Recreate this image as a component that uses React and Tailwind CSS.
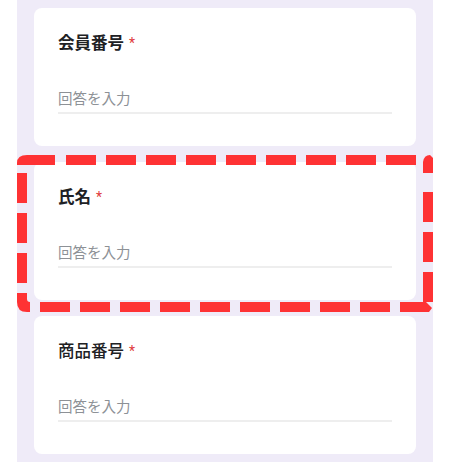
import React from "react";

const questions = [
  { id: 1, title: "会員番号", weight: "font-bold" },
  { id: 2, title: "氏名", weight: "font-bold" },
  { id: 3, title: "商品番号", weight: "font-medium" },
];

const QuestionCard = ({ title, weight }) => {
  return (
    <div className="bg-white rounded-lg h-[138px] px-6 pt-6 pb-8 flex flex-col">
      <div className={`h-6 flex items-center text-[16.5px] text-[#202124] leading-6 ${weight}`}>
        <span>{title}</span>
        <span className="text-[#e0393b] font-normal pl-[5px] self-start text-[14px] leading-4 mt-[3px]">*</span>
      </div>
      <div className="mt-[33px] flex flex-col">
        <span className="text-[14.5px] text-[#8d9196] leading-[21px] h-[21px]">回答を入力</span>
        <div className="mt-[2px] h-[2px] bg-[#eeeeee]" />
      </div>
    </div>
  );
};

// red dashed frame around the second card
const Highlight = () => {
  const red = "#fe3234";
  const top = [66, 106, 146, 186, 226, 266, 306, 346, 386];
  const bottom = [40, 80, 120, 160, 200, 240, 280, 320, 360];
  const left = [173, 213, 253];
  const right = [192, 232, 272];
  return (
    <svg className="absolute top-0 left-0 pointer-events-none" width="450" height="462" viewBox="0 0 450 462">
      <g fill={red}>
        <path d="M17 165 L17 163 Q17 155 27 155 L55 155 L55 165 Z" />
        {top.map((x) => (
          <rect key={"t" + x} x={x} y="155" width="30" height="10" />
        ))}
        <path d="M423 173 L423 162 Q424 155 430 155 L433 158 L433 173 Z" />
        {right.map((y) => (
          <rect key={"r" + y} x="423" y={y} width="10" height="30" />
        ))}
        <path d="M400 302 L426 302 L432 308 L429 312 L400 312 Z" />
        {bottom.map((x) => (
          <rect key={"b" + x} x={x} y="302" width="30" height="10" />
        ))}
        <path d="M17 293 L27 293 L27 299 Q27 302 30 302 L30 312 L27 312 Q17 312 17 302 Z" />
        {left.map((y) => (
          <rect key={"l" + y} x="17" y={y} width="10" height="30" />
        ))}
      </g>
    </svg>
  );
};

const App = () => {
  return (
    <div
      className="relative w-[450px] h-[462px] bg-white flex justify-center overflow-hidden"
      style={{ fontFamily: 'Roboto, "Noto Sans CJK JP", sans-serif' }}
    >
      <div className="w-[416px] h-full bg-[#efebf8] px-[17px] pt-2 flex flex-col gap-4">
        {questions.map((q) => (
          <QuestionCard key={q.id} title={q.title} weight={q.weight} />
        ))}
      </div>
      <Highlight />
    </div>
  );
};

export default App;
